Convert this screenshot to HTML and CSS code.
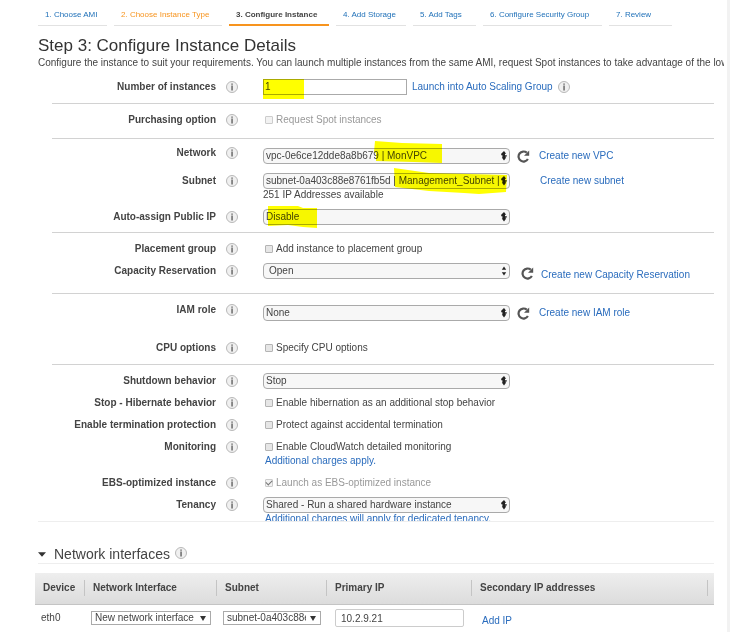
FILE: index.html
```html
<!DOCTYPE html>
<html lang="en">
<head>
<meta charset="utf-8">
<title>Step 3: Configure Instance Details</title>
<link rel="stylesheet" href="styles.css">
</head>
<body>
<svg class="defs" aria-hidden="true">
  <symbol id="info" viewBox="0 0 12 12"><circle cx="6" cy="6" r="5.5" fill="#f0f0f0" stroke="#b8b8b8"/><path d="M5.4 2.5h1.3v1.3H5.4zM5.4 4.6h1.3v4.8H5.4z" fill="#555"/></symbol>
  <symbol id="updown" viewBox="0 0 6 10"><path d="M3 0l2.2 2.8H4v1.4h1.8v1.4H4.6v1H5.2L3 9.6.8 6.6h.6V4.2H.2V2.8z" fill="#222"/></symbol>
  <symbol id="updown-split" viewBox="0 0 6 10"><path d="M3 .4l2.2 3.4H.8zM3 9.6L.8 6.2h4.4z" fill="#222"/></symbol>
  <symbol id="refresh" viewBox="0 0 13 13"><path d="M10.9 9A5 5 0 1 1 9.8 2.7" fill="none" stroke="#555" stroke-width="2.2"/><path d="M12.2.6v5.2H7z" fill="#555"/></symbol>
</svg>
<main class="page">
  <nav class="steps">
    <a class="step" href="#">1. Choose AMI</a>
    <a class="step step--visited" href="#">2. Choose Instance Type</a>
    <a class="step step--active" href="#">3. Configure Instance</a>
    <a class="step" href="#">4. Add Storage</a>
    <a class="step" href="#">5. Add Tags</a>
    <a class="step" href="#">6. Configure Security Group</a>
    <a class="step" href="#">7. Review</a>
  </nav>
  <h1 class="title">Step 3: Configure Instance Details</h1>
  <p class="intro">Configure the instance to suit your requirements. You can launch multiple instances from the same AMI, request Spot instances to take advantage of the low</p>

  <form class="pane">
    <div class="group group--count">
      <div class="row">
        <label class="label" for="count">Number of instances</label><svg class="info"><use href="#info"/></svg>
        <div class="line">
          <div class="field field--short"><input class="text" id="count" value="1"><svg class="mark mark--count" viewBox="0 0 41 20"><path d="M0 0h41v20H0z"/></svg></div>
          <a class="beside" href="#">Launch into Auto Scaling Group</a><svg class="info"><use href="#info"/></svg>
        </div>
      </div>
    </div>
    <div class="group">
      <div class="row">
        <span class="label">Purchasing option</span><svg class="info"><use href="#info"/></svg>
        <label class="check check--off"><input type="checkbox" disabled>Request Spot instances</label>
      </div>
    </div>
    <div class="group group--network">
      <div class="row row--low">
        <label class="label" for="network">Network</label><svg class="info"><use href="#info"/></svg>
        <div class="line">
          <div class="field"><select class="select" id="network"><option>vpc-0e6ce12dde8a8b679 | MonVPC</option></select><svg class="arrows"><use href="#updown"/></svg><svg class="mark mark--vpc" viewBox="0 0 68 22"><path d="M1 0L28 2L68 3V22L40 21L2 20V12L0 11z"/></svg></div>
          <button class="reload" type="button" aria-label="Refresh"><svg><use href="#refresh"/></svg></button><a href="#">Create new VPC</a>
        </div>
      </div>
      <div class="row row--note">
        <label class="label" for="subnet">Subnet</label><svg class="info"><use href="#info"/></svg>
        <div>
          <div class="line">
            <div class="field"><select class="select" id="subnet"><option>subnet-0a403c88e8761fb5d | Management_Subnet |</option></select><svg class="arrows"><use href="#updown"/></svg><svg class="mark mark--subnet" viewBox="0 0 113 26"><path d="M0 0L14 2L35 5L113 7L112 24L85 26L70 25L35 23L1 19z"/></svg></div>
            <a class="alone" href="#">Create new subnet</a>
          </div>
          <p class="note">251 IP Addresses available</p>
        </div>
      </div>
      <div class="row">
        <label class="label" for="public-ip">Auto-assign Public IP</label><svg class="info"><use href="#info"/></svg>
        <div class="field"><select class="select" id="public-ip"><option>Disable</option></select><svg class="arrows"><use href="#updown"/></svg><svg class="mark mark--disable" viewBox="0 0 49 22"><path d="M0 0H30L35 2H49V22L35 21L20 19L0 20z"/></svg></div>
      </div>
    </div>
    <div class="group group--capacity">
      <div class="row">
        <span class="label">Placement group</span><svg class="info"><use href="#info"/></svg>
        <label class="check"><input type="checkbox">Add instance to placement group</label>
      </div>
      <div class="row">
        <label class="label" for="capacity">Capacity Reservation</label><svg class="info"><use href="#info"/></svg>
        <div class="line line--wide">
          <div class="field"><select class="select select--inset" id="capacity"><option>Open</option></select><svg class="arrows"><use href="#updown-split"/></svg></div>
          <button class="reload" type="button" aria-label="Refresh"><svg><use href="#refresh"/></svg></button><a href="#">Create new Capacity Reservation</a>
        </div>
      </div>
    </div>
    <div class="group group--role">
      <div class="row row--low row--tall">
        <label class="label" for="role">IAM role</label><svg class="info"><use href="#info"/></svg>
        <div class="line">
          <div class="field"><select class="select" id="role"><option>None</option></select><svg class="arrows"><use href="#updown"/></svg></div>
          <button class="reload" type="button" aria-label="Refresh"><svg><use href="#refresh"/></svg></button><a href="#">Create new IAM role</a>
        </div>
      </div>
      <div class="row">
        <span class="label">CPU options</span><svg class="info"><use href="#info"/></svg>
        <label class="check"><input type="checkbox">Specify CPU options</label>
      </div>
    </div>
    <div class="group">
      <div class="row">
        <label class="label" for="shutdown">Shutdown behavior</label><svg class="info"><use href="#info"/></svg>
        <div class="field"><select class="select" id="shutdown"><option>Stop</option></select><svg class="arrows"><use href="#updown"/></svg></div>
      </div>
      <div class="row">
        <span class="label">Stop - Hibernate behavior</span><svg class="info"><use href="#info"/></svg>
        <label class="check"><input type="checkbox">Enable hibernation as an additional stop behavior</label>
      </div>
      <div class="row">
        <span class="label">Enable termination protection</span><svg class="info"><use href="#info"/></svg>
        <label class="check"><input type="checkbox">Protect against accidental termination</label>
      </div>
      <div class="row row--note">
        <span class="label">Monitoring</span><svg class="info"><use href="#info"/></svg>
        <div>
          <label class="check"><input type="checkbox">Enable CloudWatch detailed monitoring</label>
          <p class="note note--link"><a href="#">Additional charges apply.</a></p>
        </div>
      </div>
      <div class="row">
        <span class="label">EBS-optimized instance</span><svg class="info"><use href="#info"/></svg>
        <label class="check check--off"><input type="checkbox" checked disabled>Launch as EBS-optimized instance</label>
      </div>
      <div class="row">
        <label class="label" for="tenancy">Tenancy</label><svg class="info"><use href="#info"/></svg>
        <div>
          <div class="field"><select class="select" id="tenancy"><option>Shared - Run a shared hardware instance</option></select><svg class="arrows"><use href="#updown"/></svg></div>
          <p class="note note--link"><a href="#">Additional charges will apply for dedicated tenancy.</a></p>
        </div>
      </div>
    </div>
  </form>

  <section>
    <h2 class="subtitle"><svg class="caret" viewBox="0 0 9 5"><path d="M0 0h9L4.5 5z" fill="#333"/></svg>Network interfaces<svg class="info"><use href="#info"/></svg></h2>
    <table class="table">
      <colgroup><col class="c-device"><col class="c-interface"><col class="c-subnet"><col class="c-primary"><col><col class="c-end"></colgroup>
      <thead>
        <tr><th><span>Device</span></th><th><span>Network Interface</span></th><th><span>Subnet</span></th><th><span>Primary IP</span></th><th><span>Secondary IP addresses</span></th><th></th></tr>
      </thead>
      <tbody>
        <tr>
          <td>eth0</td>
          <td><div class="drop"><select aria-label="Network interface"><option>New network interface</option></select><svg viewBox="0 0 6 5"><path d="M0 0h6L3 5z" fill="#333"/></svg></div></td>
          <td><div class="drop drop--subnet"><select aria-label="Subnet"><option>subnet-0a403c88e8761fb5d</option></select><svg viewBox="0 0 6 5"><path d="M0 0h6L3 5z" fill="#333"/></svg></div></td>
          <td><input class="ip" aria-label="Primary IP" value="10.2.9.21"></td>
          <td class="add"><a href="#">Add IP</a></td>
          <td></td>
        </tr>
      </tbody>
    </table>
  </section>
</main>
</body>
</html>
```
FILE: styles.css
```css
* { box-sizing: border-box; }
body {
  margin: 0;
  background: #fff;
  color: #444;
  font: 10px/16px "Liberation Sans", Arial, sans-serif;
}
h1, h2, p { margin: 0; font-weight: normal; }
a { color: #2a6cbd; text-decoration: none; white-space: nowrap; }
input, select, button { margin: 0; font: inherit; color: inherit; }
svg { display: block; }
.defs { position: absolute; width: 0; height: 0; }

.page {
  min-height: 100vh;
  padding: 6px 13px 0 38px;
  border-right: 3px solid #f2f2f2;
  overflow: hidden;
}

.steps {
  display: grid;
  grid-template-columns: 69fr 108fr 100fr 70fr 63fr 119fr 63fr;
  column-gap: 7px;
  margin-right: 42px;
  font-size: 8px;
  line-height: 18px;
}
.step { padding-left: 7px; border-bottom: 1px solid #e2e2e2; color: #1f70b8; }
.step--visited { color: #f7941e; }
.step--active { color: #444; font-weight: bold; border-bottom: 2px solid #f7941e; }

.title { margin-top: 10px; font-size: 17px; line-height: 20px; color: #333; }
.intro { margin-right: -10px; line-height: 14px; padding-bottom: 1px; white-space: nowrap; overflow: hidden; }

.pane { height: 451px; overflow: hidden; border-bottom: 1px solid #eee; }
.group { margin-left: 14px; padding: 8px 0 4px; border-bottom: 1px solid #d2d2d2; }
.group--count { padding-bottom: 2px; }
.group--network { padding: 6px 0 1px; }
.group--capacity { padding-bottom: 8px; }
.group--role { padding-bottom: 2px; }
.row {
  display: grid;
  grid-template-columns: 164px 12px 1fr;
  column-gap: 10px;
  align-items: start;
  min-height: 22px;
}
.row > :last-child { margin-left: 15px; }
.row--low { min-height: 28px; }
.row--low > .line { margin-top: 3px; }
.row--tall { min-height: 38px; }
.row--note { min-height: 36px; }
.label { text-align: right; font-weight: bold; }
.info { width: 12px; height: 12px; margin-top: 2px; }
.line { display: flex; align-items: center; }
.line .info { margin: 0 0 0 5px; }
.beside { margin-left: 5px; }
.alone { margin-left: 30px; }
.field { position: relative; width: 247px; }
.field--short { width: 144px; }

.text { display: block; width: 100%; height: 16px; padding: 0 1px; border: 1px solid #aaa; background: #fff; }
.select {
  appearance: none;
  display: block;
  width: 100%;
  height: 16px;
  padding: 0 10px 0 2px;
  border: 1px solid #aaa;
  border-radius: 4px;
  background: #f7f7f7;
  line-height: 14px;
}
.select--inset { padding-left: 5px; }
.arrows { position: absolute; top: 3px; right: 3px; width: 6px; height: 10px; pointer-events: none; }
.mark { position: absolute; fill: #ff0; mix-blend-mode: multiply; pointer-events: none; }
.mark--count { left: 0; top: 0; width: 41px; height: 20px; }
.mark--vpc { left: 111px; top: -7px; width: 68px; height: 22px; }
.mark--subnet { left: 131px; top: -5px; width: 113px; height: 26px; }
.mark--disable { left: 5px; top: -3px; width: 49px; height: 22px; }

.reload { width: 13px; height: 13px; margin: 0 9px 0 7px; padding: 0; border: 0; background: none; }
.reload svg { width: 13px; height: 13px; }
.line--wide { align-items: flex-start; }
.line--wide .reload { margin: 4px 7px 0 11px; }
.line--wide a { margin-top: 4px; }

.check { display: flex; align-items: center; gap: 3px; padding-left: 2px; line-height: 16px; }
.check input {
  appearance: none;
  width: 8px;
  height: 8px;
  border: 1px solid #b4b4b4;
  border-radius: 1px;
  background: #e6e6e6;
}
.check--off { color: #999; }
.check--off input { border-color: #ccc; background: #f2f2f2; }
.check--off input:checked::before {
  content: "";
  display: block;
  width: 5px;
  height: 3px;
  border: solid #777;
  border-width: 0 0 1px 1px;
  transform: rotate(-45deg);
}
.note { line-height: 12px; }
.note--link { padding-left: 2px; }

.subtitle {
  display: flex;
  align-items: center;
  margin-top: 23px;
  border-bottom: 1px solid #eee;
  font-size: 14px;
  line-height: 18px;
}
.caret { width: 8px; height: 5px; margin-right: 8px; }
.subtitle .info { margin: 0 0 3px 5px; }

.table { width: calc(100% + 3px); margin: 9px 0 0 -3px; border-collapse: collapse; table-layout: fixed; }
.c-device { width: 50px; }
.c-interface { width: 132px; }
.c-subnet { width: 110px; }
.c-primary { width: 145px; }
.c-end { width: 6px; }
.table thead { background: linear-gradient(#eee, #dcdcdc); }
.table th { height: 31px; padding: 0; border-bottom: 1px solid #c4c4c4; text-align: left; white-space: nowrap; }
.table th span { display: block; padding-left: 8px; border-right: 1px solid #c4c4c4; }
.table td { height: 28px; padding: 0 6px; vertical-align: middle; }
.table td.add { padding: 5px 0 0 10px; }
.drop { position: relative; width: 120px; }
.drop--subnet { width: 98px; }
.drop select {
  appearance: none;
  display: block;
  width: 100%;
  height: 14px;
  padding: 0 14px 0 3px;
  border: 1px solid #aaa;
  border-radius: 0;
  background: #fff;
  line-height: 12px;
}
.drop svg { position: absolute; top: 5px; right: 5px; width: 6px; height: 5px; pointer-events: none; }
.ip { display: block; width: 129px; height: 18px; margin-left: 2px; padding: 0 5px; border: 1px solid #ccc; border-radius: 2px; background: #fff; }
```
